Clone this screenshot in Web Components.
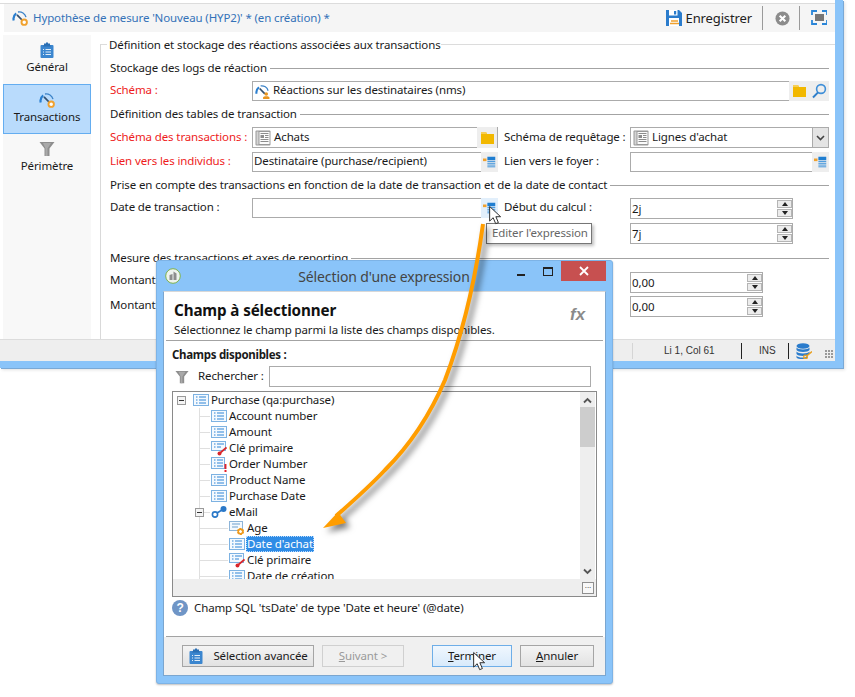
<!DOCTYPE html>
<html lang="fr">
<head>
<meta charset="utf-8">
<title>Hypothèse de mesure</title>
<style>
  html, body { margin: 0; padding: 0; background: #fff; }
  body { position: relative; width: 855px; height: 697px; overflow: hidden; color: #1a1a1a;
    font: 11.5px/16px "Noto Sans", "Open Sans", sans-serif; letter-spacing: -.12px; }
  fx-win { position: absolute; left: 156px; top: 260px; }
  fx-tip { position: absolute; left: 486px; top: 223px; }
  fx-arrow { position: absolute; left: 0; top: 0; }
  .cur1 { position: absolute; left: 489px; top: 205px; }
  .cur2 { position: absolute; left: 473px; top: 651px; }
</style>
</head>
<body>
<hyp-window>
  <hyp-toolbar></hyp-toolbar>
  <div style="display:flex;flex:1;min-height:0">
    <side-nav></side-nav>
    <form-pane></form-pane>
  </div>
  <status-bar></status-bar>
</hyp-window>

<fx-tip>Editer l'expression</fx-tip>
<fx-win></fx-win>
<fx-arrow></fx-arrow>
<ui-icon class="cur1" name="cursor" w="13" h="21"></ui-icon>
<ui-icon class="cur2" name="cursor" w="13" h="21"></ui-icon>

<script>
const listIcon = `<rect x=".5" y="2.5" width="15" height="11" fill="#f4f9fe" stroke="#7db2e2"/><path d="M3 5h1.5M3 8h1.5M3 11h1.5M6 5h7M6 8h7M6 11h7" stroke="#2f86d6" stroke-width="1.2"/>`;
const gauge = `<path d="M1.7 10.5A7 7 0 0 1 4.2 3.4" fill="none" stroke="#2a7fd0" stroke-width="2.2"/><path d="M6 2A7 7 0 0 1 14 7.2" fill="none" stroke="#3c83c8" stroke-width="1.3"/><path d="M5 4.8L10.5 10.5" stroke="#33506f" stroke-width="1.8"/>`;
const ICONS = {
  gauge: gauge + `<circle cx="12.2" cy="12.2" r="2.7" fill="#fff" stroke="#f0a12e" stroke-width="1.9"/>`,
  gaugeuser: gauge + `<circle cx="12" cy="10.6" r="1.9" fill="#e9951f"/><path d="M8.6 16v-1.3c0-1 1-1.6 3.4-1.6s3.4.6 3.4 1.6V16z" fill="#e9951f"/>`,
  clipboard: `<rect x="1.5" y="3" width="13" height="13" rx="1" fill="#3b86cf"/><path d="M5 3V1.5h2V.5h2v1h2V3l1 1.5H4z" fill="#2a6fb4"/><path d="M4 7.5h1M6.5 7.5h5.5M4 10h1M6.5 10h5.5M4 12.5h1M6.5 12.5h5.5" stroke="#fff" stroke-opacity=".85"/>`,
  funnel: `<path d="M.5 1h15l-5 6.5V15h-5V7.5z" fill="#8e8e8e"/><path d="M6.5 7.5V15h2V7.5L12 2H4z" fill="#a9a9a9"/>`,
  list: listIcon,
  key: `<rect x=".5" y="1.500" width="14" height="9" fill="#f4f9fe" stroke="#7db2e2"/><path d="M3 4h1.500M3 7h1.500M6 4h7M6 7h4" stroke="#2f86d6" stroke-width="1.200"/><path d="M15.500 7.500L9 13" stroke="#d9262b" stroke-width="1.700"/><circle cx="8.500" cy="13.500" r="2" fill="#d9262b"/>`,
  warn: `<rect x=".5" y="1.500" width="13" height="11" fill="#f4f9fe" stroke="#7db2e2"/><path d="M3 4h1.500M3 7h1.500M3 10h1.500M6 4h6M6 7h6M6 10h6" stroke="#2f86d6" stroke-width="1.200"/><path d="M14.500 8v5" stroke="#e3202a" stroke-width="1.900"/><rect x="13.500" y="14" width="2" height="2" fill="#e3202a"/>`,
  gear: `<rect x=".5" y="1.5" width="13" height="9" fill="#f4f9fe" stroke="#8db4d8"/><path d="M3 4h8M3 7h6" stroke="#6f9fcc"/><circle cx="11.5" cy="11.5" r="2.6" fill="#fff" stroke="#ee9a1d" stroke-width="2" stroke-dasharray="2 .7"/><circle cx="11.5" cy="11.5" r="2.2" fill="none" stroke="#ee9a1d" stroke-width="1.4"/>`,
  link: `<circle cx="4" cy="10.5" r="2.6" fill="#fff" stroke="#2a78c8" stroke-width="1.6"/><path d="M6 9l5-3" stroke="#2a78c8" stroke-width="1.6"/><circle cx="12.5" cy="5" r="3" fill="#2a78c8"/>`,
  folder: `<path d="M2 2h5l1 2h7v10H2z" fill="#f2b800"/><path d="M2 2h5l1 2H2z" fill="#f7cf55"/>`,
  search: `<circle cx="10" cy="6" r="4.4" fill="none" stroke="#3f8fd8" stroke-width="1.6"/><path d="M7 9.4L2 14.5" stroke="#2f7fca" stroke-width="2"/>`,
  table: `<rect x=".5" y=".5" width="15" height="15" rx="1" fill="#999"/><rect x="1.500" y="1.500" width="2" height="13" fill="#d4d4d4"/><rect x="4.500" y="2" width="10" height="12" fill="#fbfbfb"/><rect x="5.500" y="5" width="3.500" height="3" fill="#8c8c8c"/><path d="M5.500 3.500h8M10 5.500h3.500M10 7.500h3.500M5.500 9.500h8M5.500 11.500h8" stroke="#8c8c8c"/>`,
  expr: `<rect x="0" y="4" width="4" height="3" fill="#f0a12e"/><rect x="5" y="2" width="9" height="4" fill="#1f7ed1"/><path d="M5 7.5h9M5 9.5h9M5 11.5h9M5 13.5h9" stroke="#2f8cd9"/>`,
  save: `<path d="M0 0h13l3 3v13H0z" fill="#2b7ccc"/><rect x="3" y="0" width="8.5" height="5.5" fill="#fff"/><rect x="8" y="1" width="2.2" height="3.5" fill="#2b7ccc"/><rect x="3" y="8" width="10" height="8" fill="#fff"/><path d="M5 11h7M4 13.5h9" stroke="#f0a12e" stroke-width="1.5"/>`,
  stop: `<circle cx="8" cy="8" r="7.5" fill="#8c8c8c"/><path d="M5 5l6 6M11 5l-6 6" stroke="#fff" stroke-width="2.2"/>`,
  full: `<path d="M1 5V1h5M11 1h5v4M16 10v4h-5M6 14H1v-4" fill="none" stroke="#2b86d8" stroke-width="1.8"/><rect x="4" y="4" width="9" height="7" fill="#777"/>`,
  db: `<ellipse cx="7" cy="3" rx="6.5" ry="2.8" fill="#2b7ccc"/><path d="M.5 4.5c1 2.6 12 2.6 13 0V7c-1 2.6-12 2.6-13 0zM.5 8.5c1 2.6 12 2.6 13 0V11c-1 2.6-12 2.6-13 0zM.5 12.5c1 2.6 10 2.6 11 .5v2c-2 1.4-10 1.4-11-.5z" fill="#2b7ccc"/><path d="M16 8.500l-6 5" stroke="#e9a020" stroke-width="1.5"/><circle cx="9.500" cy="14" r="1.800" fill="none" stroke="#e9a020" stroke-width="1.300"/>`,
  app: `<circle cx="8" cy="8" r="7.300" fill="#eef3ee" stroke="#7fb24a"/><path d="M4.500 12V7l3-1v6zM8.500 12V3.500l3 2V12z" fill="#8d8d8d"/>`,
  cursor: `<path d="M.7 .8V16.500l3.800-3.600 2.700 6.400 2.900-1.200-2.700-6.300h5.100z" fill="#fff" stroke="#222"/>`
};

class UiIcon extends HTMLElement {
  connectedCallback() {
    const w = this.getAttribute('w') || 16;
    const h = this.getAttribute('h') || w;
    const name = this.getAttribute('name');
    const vb = name === 'cursor' ? '0 0 14 21' : '0 0 16 16';
    this.attachShadow({ mode: 'open' }).innerHTML = `
      <style>:host{display:inline-block;line-height:0;flex:none} svg{display:block}</style>
      <svg width="${w}" height="${h}" viewBox="${vb}">${ICONS[name]}</svg>`;
  }
}
customElements.define('ui-icon', UiIcon);

class HypWindow extends HTMLElement {
  constructor() {
    super();
    this.attachShadow({ mode: 'open' }).innerHTML = `
      <style>
        :host { display: flex; flex-direction: column; box-sizing: border-box; width: 843px; height: 368px;
          padding-top: 3px; background: #fff; border-right: 8px solid #8ac4f9; border-bottom: 7px solid #8ac4f9;
          box-shadow: 1px 1px 0 #7aa9d6, 2px 2px 3px rgba(0,0,0,.12); }
      </style>
      <slot></slot>`;
  }
}
customElements.define('hyp-window', HypWindow);

class HypToolbar extends HTMLElement {
  constructor() {
    super();
    this.attachShadow({ mode: 'open' }).innerHTML = `
      <style>
        :host { display: block; border-top: 1px solid #dcdcdc; }
        .bar { display: flex; align-items: center; height: 28px; margin-left: 4px; padding: 0 8px; background: #f5f5f5; }
        .title { margin-left: 5px; color: #3472b8; }
        .save { margin-left: auto; display: flex; align-items: center; gap: 4px; font-size: 13px; color: #222; }
        .sep { width: 1px; height: 24px; background: #9a9a9a; }
      </style>
      <div class="bar">
        <ui-icon name="gauge"></ui-icon>
        <span class="title">Hypothèse de mesure 'Nouveau (HYP2)' * (en création) *</span>
        <span class="save"><ui-icon name="save"></ui-icon>Enregistrer</span>
        <span class="sep" style="margin-left:10px"></span>
        <ui-icon name="stop" w="15" style="margin-left:12px"></ui-icon>
        <span class="sep" style="margin-left:9px"></span>
        <ui-icon name="full" style="margin-left:11px"></ui-icon>
      </div>`;
  }
}
customElements.define('hyp-toolbar', HypToolbar);

class SideNav extends HTMLElement {
  constructor() {
    super();
    const items = [
      { label: 'Général', icon: 'clipboard', h: 49 },
      { label: 'Transactions', icon: 'gauge', on: true, h: 50 },
      { label: 'Périmètre', icon: 'funnel', h: 49 }
    ];
    const links = items.map(i => `
      <div class="item ${i.on ? 'on' : ''}" style="height:${i.h}px">
        <ui-icon name="${i.icon}"></ui-icon><span>${i.label}</span>
      </div>`).join('');
    this.attachShadow({ mode: 'open' }).innerHTML = `
      <style>
        :host { display: block; box-sizing: border-box; width: 88px; margin: 3px 0 0 3px; background: #f8f8f8; }
        .item { box-sizing: border-box; display: flex; flex-direction: column; align-items: center; justify-content: flex-end;
          gap: 1px; padding-bottom: 8px; border: 1px solid transparent; }
        .item.on { background: #b9dbfc; border-color: #64adf0; }
        span { color: #1a1a1a; }
      </style>
      ${links}`;
  }
}
customElements.define('side-nav', SideNav);

class GroupTitle extends HTMLElement {
  constructor() {
    super();
    this.attachShadow({ mode: 'open' }).innerHTML = `
      <style>
        :host { display: flex; height: 16px; gap: 3px; }
        i { flex: 1; height: 1px; margin-top: 8px; background: #a3a3a3; }
      </style>
      <slot></slot><i></i>`;
  }
}
customElements.define('group-title', GroupTitle);

class FormRow extends HTMLElement {
  constructor() {
    super();
    this.attachShadow({ mode: 'open' }).innerHTML = `
      <style>
        :host { display: grid; grid-template-columns: 142px 246px 6px 126px 199px; align-items: center; }
      </style>
      <slot></slot>`;
  }
}
customElements.define('form-row', FormRow);

class TextField extends HTMLElement {
  constructor() {
    super();
    const root = this.attachShadow({ mode: 'open' });
    const h = this.getAttribute('h') || 20;
    const btn = (this.getAttribute('btn') || '').split(' ').filter(Boolean);
    const icon = this.getAttribute('icon');
    const btnw = this.getAttribute('btnw') || 17;
    const hover = this.hasAttribute('hover');
    root.innerHTML = `
      <style>
        :host { display: block; box-sizing: border-box; height: ${h}px; }
        .box { box-sizing: border-box; display: flex; height: 100%; border: 1px solid #ababab; background: #fff;
          border-right-width: ${this.hasAttribute('open-right') ? 0 : 1}px; }
        .val { flex: 1; display: flex; align-items: center; gap: 3px; padding-left: ${icon ? 2 : 1}px; white-space: nowrap; overflow: hidden; }
        .val span { margin-top: -2px; }
        .btn { display: flex; align-items: center; justify-content: center; width: ${btnw}px; margin: -1px 0; background: ${hover ? '#e2effb' : '#eeeeee'}; }
        .combo { display: flex; align-items: center; justify-content: center; width: 15px; background: #e4e4e4; border-left: 1px solid #ababab; }
      </style>
      <div class="box">
        <div class="val">${icon ? `<ui-icon name="${icon}" w="${icon === 'gaugeuser' ? 15 : 16}"></ui-icon>` : ''}<span>${this.getAttribute('value') || ''}</span></div>
        ${btn.map(b => b === 'combo'
          ? `<div class="combo"><svg width="9" height="6"><path d="M1 1l3.500 3.500L8 1" fill="none" stroke="#444" stroke-width="1.600"/></svg></div>`
          : `<div class="btn"><ui-icon name="${b}" w="${b === 'expr' ? 14 : 16}"></ui-icon></div>`).join('')}
      </div>`;
  }
}
customElements.define('text-field', TextField);

class SpinBox extends HTMLElement {
  constructor() {
    super();
    this.attachShadow({ mode: 'open' }).innerHTML = `
      <style>
        :host { display: block; box-sizing: border-box; height: 21px; width: ${this.getAttribute('w') || 163}px; }
        .box { box-sizing: border-box; height: 100%; display: flex; border: 1px solid #ababab; background: #fff; }
        .val { flex: 1; padding-left: 1px; line-height: 19px; }
        .btns { display: flex; flex-direction: column; gap: 1px; width: 15px; padding: 1px 0; }
        .btns b { flex: 1; display: flex; align-items: center; justify-content: center; background: #ececec; border: 1px solid #b5b5b5; }
        .up { border-left: 3.500px solid transparent; border-right: 3.500px solid transparent; border-bottom: 4px solid #222; }
        .dn { border-left: 3.500px solid transparent; border-right: 3.500px solid transparent; border-top: 4px solid #222; }
      </style>
      <div class="box"><div class="val">${this.getAttribute('value')}</div>
        <div class="btns"><b><i class="up"></i></b><b><i class="dn"></i></b></div></div>`;
  }
}
customElements.define('spin-box', SpinBox);

class FormPane extends HTMLElement {
  constructor() {
    super();
    const red = 'color:#ee1c1c;margin-top:-2px';
    const up = 'margin-top:-2px';
    this.attachShadow({ mode: 'open' }).innerHTML = `
      <style>
        :host { display: block; box-sizing: border-box; flex: 1; margin: 12px 0 0 9px; border-left: 1px solid #d9d9d9; }
        .head { display: flex; height: 16px; margin-top: -7px; }
        .head i { height: 1px; margin-top: 7px; background: #dcdcdc; }
        .rows { padding-left: 9px; width: 719px; }
      </style>
      <div class="head"><i style="width:6px;margin-right:2px"></i><span>Définition et stockage des réactions associées aux transactions</span><i style="flex:1"></i></div>
      <div class="rows">
        <group-title style="margin-top:7px">Stockage des logs de réaction</group-title>
        <form-row style="margin-top:5px;height:20px">
          <span style="${red}">Schéma :</span>
          <text-field h="20" open-right icon="gaugeuser" btn="folder search" btnw="20" value="Réactions sur les destinataires (nms)" style="grid-column:2 / 6"></text-field>
        </form-row>
        <group-title style="margin-top:5px">Définition des tables de transaction</group-title>
        <form-row style="margin-top:5px;height:21px">
          <span style="${red}">Schéma des transactions :</span>
          <text-field h="21" icon="table" btn="folder" btnw="20" value="Achats"></text-field>
          <span></span>
          <span style="${up}">Schéma de requêtage :</span>
          <text-field h="21" icon="table" btn="combo" value="Lignes d'achat"></text-field>
        </form-row>
        <form-row style="margin-top:4px;height:20px">
          <span style="${red}">Lien vers les individus :</span>
          <text-field h="20" open-right btn="expr" value="Destinataire (purchase/recipient)"></text-field>
          <span></span>
          <span style="${up}">Lien vers le foyer :</span>
          <text-field h="20" open-right btn="expr"></text-field>
        </form-row>
        <group-title style="margin-top:5px">Prise en compte des transactions en fonction de la date de transaction et de la date de contact</group-title>
        <form-row style="margin-top:5px;height:21px;align-items:start">
          <span style="margin-top:1px">Date de transaction :</span>
          <text-field h="20" open-right hover btn="expr"></text-field>
          <span></span>
          <span style="margin-top:1px">Début du calcul :</span>
          <spin-box value="2j"></spin-box>
        </form-row>
        <form-row style="margin-top:4px;height:21px">
          <span></span><span></span><span></span><span></span>
          <spin-box value="7j"></spin-box>
        </form-row>
        <group-title style="margin-top:6px">Mesure des transactions et axes de reporting</group-title>
        <form-row style="margin-top:6px;height:21px;align-items:start">
          <span>Montant</span><span></span><span></span><span></span>
          <spin-box w="133" value="0,00"></spin-box>
        </form-row>
        <form-row style="margin-top:3px;height:21px;align-items:start">
          <span style="margin-top:1px">Montant</span><span></span><span></span><span></span>
          <spin-box w="133" value="0,00"></spin-box>
        </form-row>
      </div>`;
  }
}
customElements.define('form-pane', FormPane);

class StatusBar extends HTMLElement {
  constructor() {
    super();
    this.attachShadow({ mode: 'open' }).innerHTML = `
      <style>
        :host { display: flex; align-items: center; box-sizing: border-box; height: 22px; background: #eeeeee; border-top: 1px solid #dcdcdc;
          font: 10px/16px "Liberation Sans", sans-serif; color: #333; letter-spacing: 0; }
        .s { width: 1px; height: 16px; background: #222; }
        .c { box-sizing: border-box; text-align: center; padding-left: 5px; }
        .grip { width: 8px; height: 8px; margin: 6px 2px 0 13px; background: radial-gradient(circle at 1px 1px, #999 1px, transparent 1.2px) 0 0 / 3px 3px; }
      </style>
      <span class="s" style="margin-left:632px;background:#d5d5d5"></span>
      <span class="c" style="width:109px">Li 1, Col 61</span>
      <span class="s"></span>
      <span class="c" style="width:47px">INS</span>
      <span class="s"></span>
      <ui-icon name="db" style="margin-left:7px"></ui-icon>
      <span class="grip"></span>`;
  }
}
customElements.define('status-bar', StatusBar);

class FxTip extends HTMLElement {
  constructor() {
    super();
    this.attachShadow({ mode: 'open' }).innerHTML = `
      <style>
        :host { box-sizing: border-box; display: flex; align-items: center; width: 106px; height: 21px; padding: 0 0 2px 5px;
          background: #fff; border: 1px solid #767676; color: #666; box-shadow: 2px 2px 3px rgba(0,0,0,.25); white-space: nowrap; }
      </style>
      <slot></slot>`;
  }
}
customElements.define('fx-tip', FxTip);

class TreeRow extends HTMLElement {
  constructor() {
    super();
    const level = +this.getAttribute('level');
    const exp = this.hasAttribute('exp');
    const left = [20, 38, 56][level];
    const lines = level === 0 ? 'none'
      : `linear-gradient(#dfdfdf,#dfdfdf) 26px 0 / 1px 100% no-repeat, linear-gradient(#dfdfdf,#dfdfdf) 26px 8px / ${left - 27}px 1px no-repeat`;
    const sel = this.hasAttribute('sel');
    this.attachShadow({ mode: 'open' }).innerHTML = `
      <style>
        :host { display: flex; align-items: center; flex: none; height: 16px; padding-left: ${exp ? left - 16 : left}px; background: ${lines}; white-space: nowrap; }
        .exp { box-sizing: border-box; width: 9px; height: 9px; margin-right: 7px; border: 1px solid #9a9a9a; background: #f4f4f4; }
        .exp i { display: block; width: 5px; height: 1px; margin: 3px 1px; background: #333; }
        .t { margin-left: 2px; }
        .sel { margin-left: 1px; padding: 0 1px; height: 16px; background: #2f8ce6; color: #fff; outline: 1px dotted #bcdcff; outline-offset: -1px; }
      </style>
      ${exp ? '<span class="exp"><i></i></span>' : ''}
      <ui-icon name="${this.getAttribute('icon')}"></ui-icon>
      <span class="${sel ? 'sel' : 't'}"><slot></slot></span>`;
  }
}
customElements.define('tree-row', TreeRow);

class TreeView extends HTMLElement {
  constructor() {
    super();
    this.attachShadow({ mode: 'open' }).innerHTML = `
      <style>
        :host { display: grid; grid-template-columns: 1fr 15px 1px; grid-template-rows: 1fr 17px; box-sizing: border-box;
          height: 206px; margin: 4px 6px 0 6px; border: 1px solid #8a8a8a; background: #fff; }
        .rows { display: flex; flex-direction: column; overflow: hidden; min-height: 0; }
        .bar { display: flex; flex-direction: column; align-items: center; background: #eeeeee; min-height: 0; }
        .th { width: 100%; height: 40px; background: #cdcdcd; margin-top: 3px; }
        .sp { flex: 1; }
        .foot { grid-column: 1 / 4; display: flex; justify-content: flex-end; background: #eeeeee; }
        .more { box-sizing: border-box; width: 12px; height: 12px; margin: 3px 2px 0 0; border: 1px solid #8f8f8f; background: #f8f8f8;
          font: 8px/5px "Liberation Sans", sans-serif; text-align: center; letter-spacing: 0; }
      </style>
      <div class="rows"><slot></slot></div>
      <div class="bar">
        <svg width="9" height="7" style="margin-top:5px"><path d="M1 5.500l3.500-3.500L8 5.500" fill="none" stroke="#555" stroke-width="1.800"/></svg>
        <div class="th"></div>
        <div class="sp"></div>
        <svg width="9" height="7" style="margin-bottom:4px"><path d="M1 1.500l3.500 3.500L8 1.500" fill="none" stroke="#555" stroke-width="1.800"/></svg>
      </div>
      <div></div>
      <div class="foot"><div class="more">...</div></div>`;
  }
}
customElements.define('tree-view', TreeView);

class DlgButton extends HTMLElement {
  constructor() {
    super();
    const off = this.hasAttribute('off');
    const def = this.hasAttribute('def');
    this.attachShadow({ mode: 'open' }).innerHTML = `
      <style>
        :host { box-sizing: border-box; display: flex; align-items: center; justify-content: center; gap: 9px; height: 22px;
          border: 1px solid ${def ? '#6eaee8' : off ? '#d0d0d0' : '#a5a5a5'};
          background: ${def ? 'linear-gradient(#f0f7fe,#d8eafb)' : off ? '#f0f0f0' : 'linear-gradient(#f4f4f4,#e2e2e2)'};
          color: ${off ? '#9a9a9a' : '#1a1a1a'}; }
      </style>
      <slot></slot>`;
  }
}
customElements.define('dlg-button', DlgButton);

class FxWin extends HTMLElement {
  constructor() {
    super();
    this.attachShadow({ mode: 'open' }).innerHTML = `
      <style>
        :host { display: flex; flex-direction: column; box-sizing: border-box; width: 457px; height: 424px; padding: 0 6px 7px;
          background: #8ac4f9; border: 1px solid #7db3e6; border-radius: 3px; box-shadow: 0 1px 2px rgba(0,0,0,.25); }
        .top { flex: none; display: flex; height: 30px; }
        .top .cap { flex: 1; padding: 7px 0 0 70px; text-align: center; font-size: 14px; line-height: 18px; color: #444; }
        .top .ctl { display: flex; align-items: flex-start; }
        .min { width: 8px; height: 2px; margin: 13px 18px 0 0; background: #222; }
        .max { box-sizing: border-box; width: 10px; height: 9px; margin: 6px 8px 0 0; border: 1px solid #222; border-top-width: 2px; }
        .close { width: 45px; height: 20px; background: #c75050; display: flex; align-items: center; justify-content: center; }
        .inner { flex: 1; display: flex; flex-direction: column; min-height: 0; box-sizing: border-box; background: #fff; padding: 0 2px;
          border: 1px solid #7ba6cf; border-top-color: #d8d8d8; }
        header { position: relative; flex: none; height: 49px; box-sizing: border-box; padding: 8px 0 0 8px; border-bottom: 1px solid #a3a3a3; }
        h1 { margin: 0; font-size: 15.200px; line-height: 20px; font-weight: 700; color: #111; }
        header p { margin: 1px 0 0; line-height: 18px; }
        .fx { position: absolute; right: 18px; top: 13px; font: italic bold 17px/20px "Liberation Sans", sans-serif; color: #8a8a8a; }
        .lab { font-weight: 700; margin: 6px 0 0 6px; letter-spacing: -.3px; }
        .find { display: flex; align-items: center; height: 21px; margin: 3px 12px 0 9px; }
        .find span { margin: -2px 0 0 9px; width: 71px; }
        .find div { flex: 1; box-sizing: border-box; height: 21px; border: 1px solid #ababab; }
        .hint { flex: none; display: flex; align-items: center; gap: 6px; height: 20px; margin: 1px 0 0 6px; }
        .q { width: 16px; height: 16px; border-radius: 50%; background: #6f95c6; color: #fff; font: bold 12px/16px "Liberation Sans", sans-serif; text-align: center; }
        hr { flex: none; width: 100%; height: 1px; margin: auto 0 0; border: 0; background: #a3a3a3; }
        footer { flex: none; display: flex; align-items: center; box-sizing: border-box; height: 38px; margin: 0 -2px; padding: 0 0 1px 18px; background: #f0f0f0; }
      </style>
      <div class="top">
        <ui-icon name="app" style="margin:7px 0 0 2px"></ui-icon>
        <div class="cap">Sélection d'une expression</div>
        <div class="ctl"><i class="min"></i><i class="max"></i>
          <span class="close"><svg width="10" height="10"><path d="M1 1l8 8M9 1l-8 8" stroke="#fff" stroke-width="1.800"/></svg></span></div>
      </div>
      <div class="inner">
        <header>
          <h1>Champ à sélectionner</h1>
          <p>Sélectionnez le champ parmi la liste des champs disponibles.</p>
          <span class="fx">fx</span>
        </header>
        <div class="lab">Champs disponibles :</div>
        <div class="find"><ui-icon name="funnel" w="14"></ui-icon><span>Rechercher :</span><div></div></div>
        <tree-view>
          <tree-row level="0" exp icon="list">Purchase (qa:purchase)</tree-row>
          <tree-row level="1" icon="list">Account number</tree-row>
          <tree-row level="1" icon="list">Amount</tree-row>
          <tree-row level="1" icon="key">Clé primaire</tree-row>
          <tree-row level="1" icon="warn">Order Number</tree-row>
          <tree-row level="1" icon="list">Product Name</tree-row>
          <tree-row level="1" icon="list">Purchase Date</tree-row>
          <tree-row level="1" exp icon="link">eMail</tree-row>
          <tree-row level="2" icon="gear">Age</tree-row>
          <tree-row level="2" sel icon="list">Date d'achat</tree-row>
          <tree-row level="2" icon="key">Clé primaire</tree-row>
          <tree-row level="2" icon="list">Date de création</tree-row>
        </tree-view>
        <div class="hint"><span class="q">?</span><span>Champ SQL 'tsDate' de type 'Date et heure' (@date)</span></div>
        <hr>
        <footer>
          <dlg-button style="width:132px"><ui-icon name="clipboard"></ui-icon>Sélection avancée</dlg-button>
          <dlg-button off style="width:82px;margin-left:8px"><span><u>S</u>uivant &gt;</span></dlg-button>
          <dlg-button def style="width:80px;margin-left:28px"><span><u>T</u>erminer</span></dlg-button>
          <dlg-button style="width:74px;margin-left:8px"><span><u>A</u>nnuler</span></dlg-button>
        </footer>
      </div>`;
  }
}
customElements.define('fx-win', FxWin);

class FxArrow extends HTMLElement {
  constructor() {
    super();
    this.attachShadow({ mode: 'open' }).innerHTML = `
      <style>
        :host { display: block; width: 855px; height: 697px; pointer-events: none; }
        svg { display: block; filter: drop-shadow(4px 4px 3px rgba(0,0,0,.55)); }
      </style>
      <svg width="855" height="697">
        <path d="M483 224C476 275 464 330 445 380C430 415 410 445 385 470C370 486 352 502 336 516" fill="none" stroke="#ff9d00" stroke-width="4"/>
        <path d="M323 528L338 512L346 523z" fill="#ff9d00"/>
      </svg>`;
  }
}
customElements.define('fx-arrow', FxArrow);
</script>
</body>
</html>
